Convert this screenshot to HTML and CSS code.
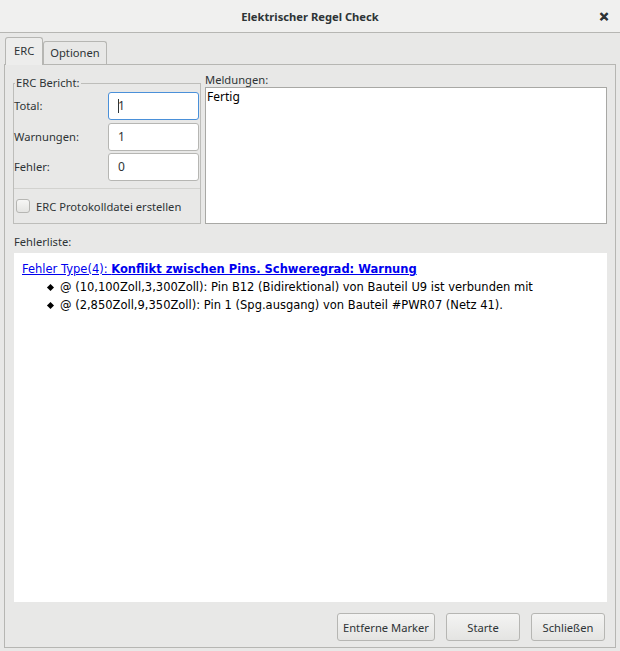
FILE: index.html
```html
<!DOCTYPE html>
<html lang="de">
<head>
    <meta charset="UTF-8">
    <title>Elektrischer Regel Check</title>
    <link rel="stylesheet" href="styles.css">
</head>
<body>
<div class="window">
    <header class="titlebar">
        <span></span>
        <span class="title">Elektrischer Regel Check</span>
        <span class="close">&#x2715;</span>
    </header>

    <div class="content">
        <div class="tabs">
            <span class="tab active">ERC</span>
            <span class="tab">Optionen</span>
        </div>

        <div class="page">
            <div class="top-row">
                <fieldset class="report">
                    <legend>ERC Bericht:</legend>
                    <div class="fields">
                        <label>Total:</label>
                        <span class="field focused"><span class="caret"></span>1</span>
                        <label>Warnungen:</label>
                        <span class="field">1</span>
                        <label>Fehler:</label>
                        <span class="field">0</span>
                    </div>
                    <div class="check-row">
                        <span class="checkbox"></span>
                        <span>ERC Protokolldatei erstellen</span>
                    </div>
                </fieldset>

                <div class="messages">
                    <div class="caption">Meldungen:</div>
                    <div class="msg-box">Fertig</div>
                </div>
            </div>

            <div class="caption list-caption">Fehlerliste:</div>
            <div class="error-list">
                <a href="#" class="marker">Fehler Type(4): <b>Konflikt zwischen Pins. Schweregrad: Warnung</b></a>
                <ul>
                    <li>@ (10,100Zoll,3,300Zoll): Pin B12 (Bidirektional) von Bauteil U9 ist verbunden mit</li>
                    <li>@ (2,850Zoll,9,350Zoll): Pin 1 (Spg.ausgang) von Bauteil #PWR07 (Netz 41).</li>
                </ul>
            </div>

            <div class="buttons">
                <button class="btn">Entferne Marker</button>
                <button class="btn">Starte</button>
                <button class="btn">Schließen</button>
            </div>
        </div>
    </div>
</div>
</body>
</html>
```

FILE: styles.css
```css
body {
    margin: 0;
    font-family: 'Noto Sans', sans-serif;
    font-size: 11.2px;
    color: #2e3436;
    background: #e8e8e7;
}

.window {
    width: 620px;
    height: 651px;
    display: flex;
    flex-direction: column;
    background: #e8e8e7;
}

/* title bar */
.titlebar {
    height: 33px;
    box-sizing: border-box;
    border-bottom: 1px solid #b6b6b3;
    background: #f0f0ef;
    display: grid;
    grid-template-columns: 1fr auto 1fr;
    align-items: center;
}

.title {
    font-weight: bold;
    font-size: 11.2px;
    color: #2e3436;
}

.close {
    justify-self: end;
    margin-right: 11px;
    font-size: 12px;
    font-weight: bold;
    color: #2e3436;
    -webkit-text-stroke: 0.6px #2e3436;
}

.content {
    flex: 1;
    display: flex;
    flex-direction: column;
    padding: 4px 4px 3px 4px;
}

/* notebook tabs */
.tabs {
    display: flex;
    align-items: flex-end;
    padding-left: 1px;
    height: 27px;
}

.tab {
    border: 1px solid #b6b6b3;
    border-bottom: none;
    border-radius: 3px 3px 0 0;
    padding: 0 6px;
    height: 23px;
    line-height: 22px;
    background: #e8e8e7;
    box-sizing: border-box;
}

.tab.active {
    height: 28px;
    line-height: 26px;
    margin-bottom: -1px;
    position: relative;
    background: #ededec;
    padding: 0 8px;
}

.page {
    flex: 1;
    border: 1px solid #b6b6b3;
    background: #e8e8e7;
    padding: 7px 7px 6px 8px;
    display: flex;
    flex-direction: column;
}

.top-row {
    display: grid;
    grid-template-columns: 188px 402px;
    column-gap: 4px;
    height: 152px;
}

/* ERC report group */
.report {
    margin: 4px 0 0 0;
    padding: 0;
    border: 1px solid #bdbdba;
    box-sizing: border-box;
    height: 148px;
    min-width: 0;
}

.report legend {
    padding: 0 1px;
    margin-left: 1px;
    line-height: 14px;
}

.fields {
    display: grid;
    grid-template-columns: 1fr 91px;
    row-gap: 2.5px;
    align-items: center;
    padding: 2px 1px 0 0;
}

.fields label {
    margin-top: -1px;
}

.field {
    height: 28px;
    box-sizing: border-box;
    border: 1px solid #b6b6b3;
    border-radius: 3px;
    background: #fff;
    padding-left: 9px;
    line-height: 26px;
    display: flex;
    align-items: center;
    font-size: 12px;
}

.field.focused {
    border-color: #4a90d9;
}

.caret {
    display: inline-block;
    width: 1px;
    height: 14px;
    background: #2e3436;
    margin-right: -1px;
}

.check-row {
    margin-top: 7px;
    border-top: 1px solid #d2d2cf;
    height: 34px;
    display: flex;
    align-items: center;
    padding-left: 2px;
    gap: 6px;
}

.checkbox {
    width: 14px;
    height: 14px;
    box-sizing: border-box;
    border: 1px solid #b6b6b3;
    border-radius: 3px;
    background: linear-gradient(#f6f6f5, #e4e4e2);
}

/* messages */
.messages {
    display: flex;
    flex-direction: column;
}

.caption {
    line-height: 15px;
}

.msg-box {
    flex: 1;
    background: #fff;
    border: 1px solid #a8a8a5;
    padding: 1px 1px;
    line-height: 16px;
    font-size: 12px;
    color: #000;
}

.list-caption {
    margin-top: 10px;
    margin-left: 1px;
}

/* error list */
.error-list {
    flex: 1;
    margin: 4px 1px 11px 1px;
    background: #fff;
    padding: 7px 8px;
    font-family: 'DejaVu Sans', sans-serif;
    font-size: 11.5px;
    line-height: 18px;
    color: #000;
}

.marker {
    color: #0000ee;
    text-decoration: underline;
}

.error-list ul {
    list-style: none;
    margin: 0;
    padding-left: 38px;
}

.error-list li {
    position: relative;
}

.error-list li::before {
    content: "";
    position: absolute;
    left: -12px;
    top: 7px;
    width: 5px;
    height: 5px;
    background: #000;
    transform: rotate(45deg);
}

/* dialog buttons */
.buttons {
    display: flex;
    justify-content: flex-end;
    gap: 11px;
    padding-right: 3px;
}

.btn {
    font-family: 'Noto Sans', sans-serif;
    font-size: 11.2px;
    color: #2e3436;
    height: 28px;
    min-width: 74px;
    padding: 0 5px;
    border: 1px solid #b6b6b3;
    border-radius: 3px;
    background: linear-gradient(#f4f4f3, #e4e4e2);
}
```
